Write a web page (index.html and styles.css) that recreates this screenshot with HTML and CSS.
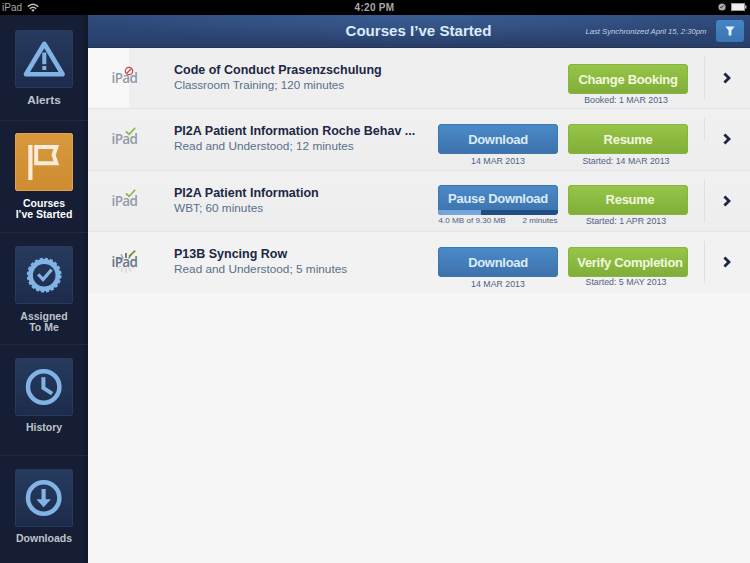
FILE: index.html
```html
<!DOCTYPE html>
<html lang="en">
<head>
  <meta charset="utf-8">
  <title>Courses I've Started</title>
  <link rel="stylesheet" href="styles.css">
</head>
<body>

  <div class="statusbar">
    <div class="carrier">
      <span>iPad</span>
      <svg class="wifi" viewBox="0 0 12 9" width="12" height="9">
        <path d="M0.8 3.6 Q6 -1 11.2 3.6" />
        <path d="M2.8 5.7 Q6 2.8 9.2 5.7" />
        <path class="dot" d="M4.2 6.9 Q6 5.6 7.8 6.9 L6 8.8 Z" />
      </svg>
    </div>
    <div class="clock">4:20 PM</div>
    <div class="power">
      <svg viewBox="0 0 8 8" width="8" height="8">
        <circle cx="4" cy="4" r="3.6" fill="#a9a9a9" />
        <path d="M4 4.3 L5.7 2.4 M4 4.3 H2.2" stroke="#222" stroke-width="0.9" fill="none" />
      </svg>
      <svg viewBox="0 0 16 8" width="16" height="8">
        <rect x="0.5" y="0.5" width="13" height="7" fill="#eee" stroke="#9a9a9a" />
        <rect x="14" y="2.3" width="1.5" height="3.4" fill="#b0b0b0" />
      </svg>
    </div>
  </div>

  <div class="app">
    <nav class="sidebar">
      <a class="item first">
        <div class="tile">
          <svg viewBox="0 0 58 58">
            <path class="line" stroke-width="4.6" d="M29.3 13.8 L47.6 44.3 H11 Z" />
            <path class="line" stroke-width="4" d="M29.3 22.5 V34.3 M29.3 36 V40" />
          </svg>
        </div>
        <span class="label">Alerts</span>
      </a>
      <a class="item second active">
        <div class="tile">
          <svg viewBox="0 0 58 58">
            <path class="line sharp" stroke-width="4.2" d="M15.4 12 V47" />
            <path class="line sharp" stroke-width="4" d="M21.2 13.9 H41.4 L38.6 22.1 L41.4 30.2 H21.2 Z" />
          </svg>
        </div>
        <span class="label">Courses<br>I’ve Started</span>
      </a>
      <a class="item third">
        <div class="tile">
          <svg viewBox="0 0 58 58">
            <circle class="line" cx="29.2" cy="29.2" r="13.7" stroke-width="4.8" />
            <circle class="line sharp" cx="29.2" cy="29.2" r="15.9" stroke-width="3" stroke-dasharray="3.1 1.9" />
            <path class="line sharp" stroke-width="3.2" d="M23.2 28.2 L28 33.6 L36.6 23.6" />
          </svg>
        </div>
        <span class="label">Assigned<br>To Me</span>
      </a>
      <a class="item fourth">
        <div class="tile">
          <svg viewBox="0 0 58 58">
            <circle class="line" cx="28.7" cy="29" r="15.7" stroke-width="4.5" />
            <path class="line sharp" stroke-width="4" d="M28.4 19.2 V29.8 L37.2 35.6" />
          </svg>
        </div>
        <span class="label">History</span>
      </a>
      <a class="item fifth">
        <div class="tile">
          <svg viewBox="0 0 58 58">
            <circle class="line" cx="28.7" cy="29" r="15.7" stroke-width="4.5" />
            <path class="solid" d="M26.5 20 H30.7 V30.2 H36 L28.6 38.2 L21.4 30.2 H26.5 Z" />
          </svg>
        </div>
        <span class="label">Downloads</span>
      </a>
    </nav>

    <main class="main">
      <header class="header">
        <h1>Courses I’ve Started</h1>
        <span class="sync">Last Synchronized April 15, 2:30pm</span>
        <button class="filter">
          <svg viewBox="0 0 10 10" width="10" height="10">
            <path d="M0.3 0.6 H9.7 L6.4 4.6 V9.4 H3.6 V4.6 Z" />
          </svg>
        </button>
      </header>

      <section class="courses">
        <div class="row swiped">
          <div class="device">
            <span>iPad</span>
            <svg class="badge blocked" viewBox="0 0 10 10">
              <circle cx="5" cy="5" r="3.7" />
              <path d="M2.5 7.5 L7.5 2.5" />
            </svg>
          </div>
          <div class="info">
            <h2>Code of Conduct Prasenzschulung</h2>
            <p>Classroom Training; 120 minutes</p>
          </div>
          <div class="action"></div>
          <div class="action">
            <button class="btn green"><span>Change Booking</span></button>
            <span class="caption status">Booked: 1 MAR 2013</span>
          </div>
          <div class="more"><svg viewBox="0 0 8 12"><path d="M1.4 1.5 L6 6 L1.4 10.5" /></svg></div>
        </div>

        <div class="row">
          <div class="device">
            <span>iPad</span>
            <svg class="badge check" viewBox="0 0 10 10"><path d="M0.8 5 L3.8 7.6 L9.3 1.6" /></svg>
          </div>
          <div class="info">
            <h2>PI2A Patient Information Roche Behav ...</h2>
            <p class="wide">Read and Understood; 12 minutes</p>
          </div>
          <div class="action">
            <button class="btn blue"><span>Download</span></button>
            <span class="caption low">14 MAR 2013</span>
          </div>
          <div class="action">
            <button class="btn green"><span>Resume</span></button>
            <span class="caption status low">Started: 14 MAR 2013</span>
          </div>
          <div class="more short"><svg viewBox="0 0 8 12"><path d="M1.4 1.5 L6 6 L1.4 10.5" /></svg></div>
        </div>

        <div class="row downloading">
          <div class="device">
            <span>iPad</span>
            <svg class="badge check" viewBox="0 0 10 10"><path d="M0.8 5 L3.8 7.6 L9.3 1.6" /></svg>
          </div>
          <div class="info">
            <h2>PI2A Patient Information</h2>
            <p class="wide">WBT; 60 minutes</p>
          </div>
          <div class="action">
            <button class="btn blue loading">
              <span>Pause Download</span>
              <i class="progress"><i class="bar" style="width: 36%"></i></i>
            </button>
            <span class="caption split"><span>4.0 MB of 9.30 MB</span><span>2 minutes</span></span>
          </div>
          <div class="action">
            <button class="btn green"><span class="shift">Resume</span></button>
            <span class="caption status">Started: 1 APR 2013</span>
          </div>
          <div class="more"><svg viewBox="0 0 8 12"><path d="M1.4 1.5 L6 6 L1.4 10.5" /></svg></div>
        </div>

        <div class="row syncing">
          <div class="device">
            <svg class="spinner" viewBox="0 0 24 24">
              <path stroke="#55653f" d="M12 2 V7" />
              <path stroke="#8a9299" d="M17 3.4 L14.6 7.6" />
              <path stroke="#a5abb3" d="M7 3.4 L9.4 7.6" />
              <path stroke="#bcc0c6" d="M3.4 7 L7.6 9.4" />
              <path stroke="#c9ccd0" d="M2 12 H7" />
              <path stroke="#d3d5d8" d="M3.4 17 L7.6 14.6" />
              <path stroke="#d6d8da" d="M7 20.6 L9.4 16.4" />
              <path stroke="#d6d8da" d="M12 22 V17" />
              <path stroke="#d9dadc" d="M17 20.6 L14.6 16.4" />
              <path stroke="#dddee0" d="M20.6 17 L16.4 14.6" />
            </svg>
            <span>iPad</span>
            <svg class="badge check" viewBox="0 0 10 10"><path d="M3.6 6.9 L9.3 1.4" /></svg>
          </div>
          <div class="info">
            <h2>P13B Syncing Row</h2>
            <p class="wide">Read and Understood; 5 minutes</p>
          </div>
          <div class="action">
            <button class="btn blue"><span>Download</span></button>
            <span class="caption low">14 MAR 2013</span>
          </div>
          <div class="action">
            <button class="btn green"><span class="shift">Verify Completion</span></button>
            <span class="caption status high">Started: 5 MAY 2013</span>
          </div>
          <div class="more"><svg viewBox="0 0 8 12"><path d="M1.4 1.5 L6 6 L1.4 10.5" /></svg></div>
        </div>
      </section>
    </main>
  </div>

</body>
</html>
```
FILE: styles.css
```css
* {
  box-sizing: border-box;
  margin: 0;
  padding: 0;
}
body {
  width: 750px;
  height: 563px;
  overflow: hidden;
  background: #f7f7f7;
  font-family: "Liberation Sans", Arial, sans-serif;
}
button {
  border: 0;
  font-family: inherit;
}

/* status bar */
.statusbar {
  display: grid;
  grid-template-columns: 1fr auto 1fr;
  align-items: center;
  height: 15px;
  padding: 0 3px 1px 2px;
  background: #000;
  color: #a8a8a8;
  font-size: 10px;
}
.carrier {
  display: flex;
  align-items: center;
  gap: 5px;
}
.wifi path {
  fill: none;
  stroke: #c4c4c4;
  stroke-width: 1.5;
}
.wifi .dot {
  fill: #c4c4c4;
  stroke: none;
}
.clock {
  font-weight: bold;
  font-size: 10px;
  letter-spacing: 0.3px;
}
.power {
  display: flex;
  justify-content: flex-end;
  align-items: center;
  gap: 5px;
}

.app {
  display: flex;
  height: 548px;
}

/* sidebar */
.sidebar {
  width: 88px;
  background: linear-gradient(to right, #151e34 80px, #10182c);
}
.item {
  display: flex;
  flex-direction: column;
  align-items: center;
  height: 112px;
  padding-top: 13px;
  border-top: 1px solid #1d273d;
  color: #bfc3ca;
  font-size: 10.5px;
  font-weight: bold;
  line-height: 11px;
  text-align: center;
}
.item.first {
  height: 105px;
  padding-top: 15px;
  border-top: 0;
  font-size: 11.8px;
}
.item.second {
  padding-top: 12px;
}
.item.fourth {
  height: 111px;
}
.item.fifth {
  height: 108px;
}
.tile {
  width: 58px;
  height: 58px;
  border: 1px solid #28395a;
  border-radius: 2px;
  background: linear-gradient(#263b5f, #1d2b4b);
}
.tile svg {
  display: block;
  width: 58px;
  height: 58px;
  margin: -1px;
}
.line {
  fill: none;
  stroke: #82b3e5;
  stroke-linejoin: round;
}
.line.sharp {
  stroke-linejoin: miter;
}
.solid {
  fill: #82b3e5;
}
.label {
  margin-top: 7px;
}
.fourth .label,
.fifth .label {
  margin-top: 6px;
}
.active {
  color: #fff;
}
.active .tile {
  border-color: #e0a24a;
  background: linear-gradient(#d9983c, #cf8c30);
}
.active .line {
  stroke: #f9ecdb;
}

/* header */
.main {
  flex: 1;
}
.header {
  display: grid;
  grid-template-columns: 1fr auto 28px;
  align-items: center;
  height: 33px;
  padding: 0 6px 1px 257.5px;
  column-gap: 9.5px;
  border-bottom: 1px solid #26334f;
  background: radial-gradient(ellipse 330px 30px at 50% 0, rgba(66, 106, 165, 0.55), transparent), linear-gradient(#2f4c7c, #283e69);
}
.header h1 {
  color: #dcebfa;
  font-size: 15.1px;
  line-height: 18px;
  white-space: nowrap;
}
.sync {
  margin-top: 1px;
  color: #c3cfe3;
  font-size: 7.7px;
  font-style: italic;
  white-space: nowrap;
}
.filter {
  display: flex;
  align-items: center;
  justify-content: center;
  height: 22px;
  border-radius: 3px;
  background: linear-gradient(#4685c6, #3a74b2);
}
.filter path {
  fill: #e3f0fb;
}

/* course list */
.row {
  display: grid;
  grid-template-columns: 76px 254px 120px 120px 1fr;
  column-gap: 10px;
  height: 61.4px;
  padding-top: 15px;
  border-bottom: 1px solid #e2e4e5;
  background: linear-gradient(#f1f1f1, #ededed);
}
.swiped {
  background: linear-gradient(to right, #f8f8f8 41px, #efefef 41px);
}
.swiped .action {
  padding-top: 1px;
}
.downloading .action {
  margin-top: -1px;
}
.syncing {
  border-bottom-color: #f3f3f3;
  background: #f2f2f2;
}
.device {
  position: relative;
  padding-left: 23.5px;
  color: #929ba7;
  font-family: "Open Sans", "Noto Sans", sans-serif;
  font-size: 13.5px;
  font-weight: 600;
  line-height: 18px;
  letter-spacing: -0.6px;
}
.device span {
  position: relative;
  display: block;
  padding-top: 6px;
}
.badge {
  position: absolute;
  left: 37px;
  top: 2px;
  width: 11px;
  height: 11px;
  fill: none;
  stroke-width: 1.6;
}
.blocked {
  left: 36px;
  top: 2.5px;
  width: 10px;
  height: 10px;
  stroke: #c8474c;
  stroke-width: 1.2;
}
.check {
  stroke: #8cb844;
}
.syncing .device {
  color: #66728a;
}
.syncing .check {
  stroke: #6f9330;
}
.spinner {
  position: absolute;
  left: 26px;
  top: 4px;
  width: 24px;
  height: 24px;
  stroke-width: 1.6;
}
.info h2 {
  color: #1b2745;
  font-size: 12.5px;
  line-height: 15px;
  white-space: nowrap;
}
.info p {
  color: #58708b;
  font-size: 11.65px;
  line-height: 14px;
  white-space: nowrap;
}
.info .wide {
  font-size: 11.8px;
}
.action {
  display: flex;
  flex-direction: column;
  align-items: center;
}
.btn {
  position: relative;
  display: flex;
  align-items: center;
  justify-content: center;
  width: 120px;
  height: 30px;
  overflow: hidden;
  border-radius: 4px;
  font-size: 13px;
  font-weight: bold;
  letter-spacing: -0.3px;
  white-space: nowrap;
}
.blue {
  background: linear-gradient(#4b8bca, #3d71aa);
  box-shadow: inset 0 0 0 1px #3d76b3;
  color: #dcebf8;
}
.green {
  background: linear-gradient(#97c649, #80ad38);
  box-shadow: inset 0 0 0 1px #86b43e;
  color: #f0f8df;
}
.loading {
  padding-bottom: 2px;
}
.shift {
  margin-left: 4px;
}
.progress {
  position: absolute;
  left: 0;
  bottom: 0;
  width: 100%;
  height: 5px;
  background: #1f4f82;
}
.bar {
  display: block;
  height: 100%;
  background: #72a6dc;
}
.caption {
  margin-top: 1px;
  color: #4d6286;
  font-size: 8.8px;
  line-height: 10px;
  white-space: nowrap;
}
.caption.low {
  margin-top: 2px;
}
.caption.high {
  margin-top: 0;
}
.caption.status {
  margin-right: 4px;
}
.caption.split {
  display: flex;
  justify-content: space-between;
  width: 119px;
  font-size: 8.1px;
}
.more {
  display: flex;
  align-items: center;
  height: 42px;
  margin: -6px 0 0 6px;
  padding-left: 19px;
  background: linear-gradient(#dddfe1, #dddfe1) 0 0 / 1px 100% no-repeat;
}
.more.short {
  background-size: 1px 22px;
}
.more svg {
  width: 8px;
  height: 12px;
  fill: none;
  stroke: #1c2640;
  stroke-width: 2.8;
}
```
